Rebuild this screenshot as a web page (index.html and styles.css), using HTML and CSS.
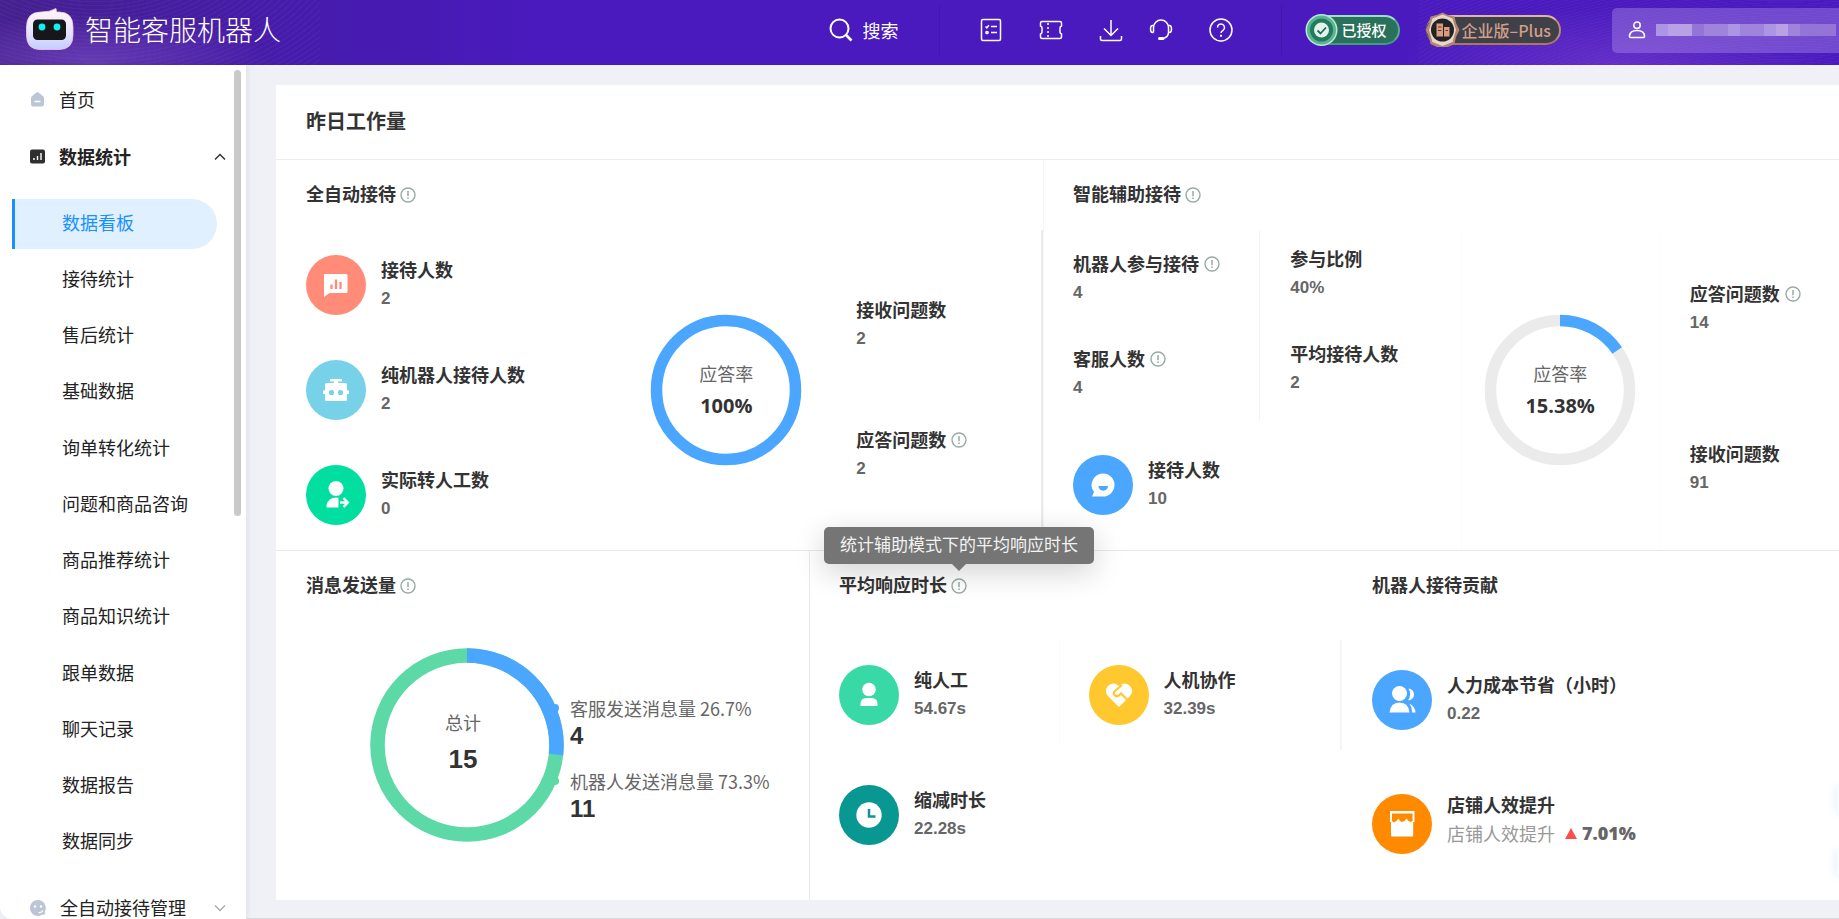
FILE: index.html
```html
<!DOCTYPE html>
<html lang="zh-CN">
<head>
<meta charset="utf-8">
<meta name="viewport" content="width=device-width, initial-scale=1">
<title>智能客服机器人 - 数据看板</title>
<link rel="stylesheet" href="styles.css">
</head>
<body>
<svg class="defs" aria-hidden="true">
  <symbol id="info" viewBox="0 0 16 16"><circle cx="8" cy="8" r="7" fill="none" stroke="#98aaa6" stroke-width="1.4"/><path d="M8 4v5.2M8 10.6v1.5" stroke="#98aaa6" stroke-width="1.5"/></symbol>
</svg>

<header class="topbar">
  <a class="brand" href="#">
    <svg class="brand-logo" width="48" height="44" viewBox="0 0 48 44" aria-hidden="true">
      <defs><linearGradient id="lg" x1="0" y1="0" x2="0" y2="1"><stop offset="0" stop-color="#fff6f5"/><stop offset=".45" stop-color="#eeeaff"/><stop offset="1" stop-color="#c4ccff"/></linearGradient></defs>
      <path d="M15 4 Q24 4 30 0.500 L30.500 4 H33 Q47 4 47 19 V27 Q47 41.500 33 41.500 H14 Q0.500 41.500 0.500 27 V19 Q0.500 4 15 4Z" fill="url(#lg)" stroke="#f3c9e6" stroke-width=".8"/>
      <rect x="7" y="11.500" width="33" height="20.500" rx="4.500" fill="#171719"/>
      <circle cx="16" cy="19" r="3.400" fill="#0ff0f5"/><circle cx="31" cy="19" r="3.400" fill="#0ff0f5"/>
    </svg>
    <span class="brand-name">智能客服机器人</span>
  </a>
  <div class="topbar-tools">
    <button class="search" type="button">
      <svg width="24" height="24" viewBox="0 0 24 24" fill="none" stroke="#fff" stroke-width="2" aria-hidden="true"><circle cx="10.500" cy="10.500" r="9"/><path d="M17 17l5.500 5.500" stroke-width="2.600"/></svg>
      <span>搜索</span>
    </button>
    <nav class="quick" aria-label="快捷工具">
      <button type="button" aria-label="任务"><svg viewBox="0 0 24 24"><rect x="2.500" y="1.500" width="19" height="21" rx="1.500"/><path d="M6.500 8.500l1.300 1.300 2.200-2.500M12 8.500h6M12 14.500h6"/><circle cx="8" cy="14.500" r="1.100"/></svg></button>
      <button type="button" aria-label="卡券"><svg viewBox="0 0 24 24"><path d="M3 3.500h18a1.500 1.500 0 0 1 1.500 1.500V8a2 2 0 0 0-1.500 2v4a2 2 0 0 0 1.500 2v3a1.500 1.500 0 0 1-1.500 1.500H3A1.500 1.500 0 0 1 1.500 19v-3a2 2 0 0 0 1.500-2v-4a2 2 0 0 0-1.500-2V5A1.500 1.500 0 0 1 3 3.500Z"/><path d="M9 5v14.500" stroke-dasharray="2 2"/></svg></button>
      <span class="quick-pair">
        <button type="button" aria-label="下载"><svg viewBox="0 0 24 24"><path d="M12 2v15.500M5 10.500l7 7 7-7M1.500 18v3a1.500 1.500 0 0 0 1.500 1.500h18a1.500 1.500 0 0 0 1.500-1.500v-3"/></svg></button>
        <button type="button" aria-label="客服"><svg viewBox="0 0 24 24"><path d="M4.500 14.500V9.500a7.500 7.500 0 0 1 15 0v5c0 3-2.500 6-6.500 6M4.500 7.500H3.500Q1.500 7.500 1.500 11t2 3.500h1M19.500 7.500h1q2 0 2 3.500t-2 3.500h-1"/><path d="M10.500 20.500h3.500" stroke-width="3" stroke-linecap="round"/></svg></button>
      </span>
      <button type="button" aria-label="帮助"><svg viewBox="0 0 24 24"><circle cx="12" cy="12" r="11"/><path d="M8.500 9.500a3.500 3.500 0 1 1 5.500 2.800q-2 1.200-2 2.700"/><path d="M12 16.800v2" stroke-width="2"/></svg></button>
    </nav>
    <div class="badges">
      <span class="badge badge-auth">
        <svg width="33" height="36" viewBox="0 0 33 36" aria-hidden="true"><circle cx="16.500" cy="18" r="16" fill="#b5ecd6"/><circle cx="16.500" cy="18" r="14.500" fill="#5fb291"/><circle cx="16.500" cy="18" r="11.500" fill="#1f7c5c"/><circle cx="16.500" cy="18" r="7.500" fill="#e4f1ec"/><path d="M12.500 18.500l3 3 5.500-6" fill="none" stroke="#1d6d53" stroke-width="1.800"/></svg>
        <span>已授权</span>
      </span>
      <span class="badge badge-plan">
        <svg width="35" height="36" viewBox="0 0 35 36" aria-hidden="true"><path d="M17.500 0.500L23 3l6.500 1.500L31 11l3.500 7-3.500 7-1.500 7-6.500 3H12l-6.500-3L4 25 .5 18 4 11 5.500 4.500 12 3Z" fill="#b08870"/><path d="M17.500 2.500L27.500 6.500 31 18 27.500 30l-10 4-10-4L4 18 7.500 6.500Z" fill="#ead6c8"/><circle cx="17.500" cy="18" r="11.500" fill="#232226"/><path d="M11.500 11.500h6.500v13h-6.500zM19 15h5.500v9.500H19z" fill="#d99d7e"/><path d="M13 15h3.500M13 18.500h3.500M20.500 18.500h2.500" stroke="#5a3d31" stroke-width="1.200"/></svg>
        <span>企业版–Plus</span>
      </span>
    </div>
    <button class="user" type="button" aria-label="账户">
      <svg width="18" height="18" viewBox="0 0 18 18" fill="none" stroke="#fff" stroke-width="1.500" aria-hidden="true"><circle cx="9" cy="4.200" r="3.200"/><path d="M1.500 15.500q0-6 7.500-6t7.500 6q0 1-1 1h-13q-1 0-1-1Z"/></svg>
      <span class="mask"><i class="m3"></i><i class="m4"></i><i class="m4"></i><i class="m1"></i><i class="m2"></i><i class="m2"></i><i class="m3"></i><i class="m2"></i><i class="m2"></i><i class="m3"></i><i class="m4"></i><i class="m2"></i><i class="m1"></i><i class="m1"></i><i class="m1"></i></span>
    </button>
  </div>
</header>

<div class="shell">
  <aside class="sidebar">
    <nav class="menu" aria-label="主菜单">
      <a class="menu-top" href="#">
        <svg width="15" height="15" viewBox="0 0 15 15" aria-hidden="true"><path d="M6.500.6q1-.8 2 0L12.800 4Q14 5 14 6v6.500q0 2-2 2H3q-2 0-2-2V6q0-1 1.200-2Z" fill="#bcc5d6"/><path d="M4.500 9.500h6" stroke="#fff" stroke-width="1.500"/></svg>
        <span>首页</span>
      </a>
      <a class="menu-top menu-open" href="#" aria-expanded="true">
        <svg width="15" height="15" viewBox="0 0 15 15" aria-hidden="true"><rect width="15" height="14" y=".5" rx="2" fill="#2f2f2f"/><path d="M4 11V9M7.500 11V7M11 11V4" stroke="#fff" stroke-width="1.400"/></svg>
        <span>数据统计</span>
        <svg class="chev" width="12" height="8" viewBox="0 0 12 8" fill="none" stroke="#333" stroke-width="1.500" aria-hidden="true"><path d="M1 6.500l5-5 5 5"/></svg>
      </a>
      <ul class="submenu">
        <li><a class="active" href="#" aria-current="page">数据看板</a></li>
        <li><a href="#">接待统计</a></li>
        <li><a href="#">售后统计</a></li>
        <li><a href="#">基础数据</a></li>
        <li><a href="#">询单转化统计</a></li>
        <li><a href="#">问题和商品咨询</a></li>
        <li><a href="#">商品推荐统计</a></li>
        <li><a href="#">商品知识统计</a></li>
        <li><a href="#">跟单数据</a></li>
        <li><a href="#">聊天记录</a></li>
        <li><a href="#">数据报告</a></li>
        <li><a href="#">数据同步</a></li>
      </ul>
      <a class="menu-top" href="#" aria-expanded="false">
        <svg width="16" height="16" viewBox="0 0 16 16" aria-hidden="true"><path d="M8 0a8 8 0 1 0 4.500 14.600q2.500.4 3-1-1-.8-.6-2A8 8 0 0 0 8 0Z" fill="#bcc5d6"/><circle cx="5" cy="6.500" r="1.200" fill="#fff"/><circle cx="11" cy="6.500" r="1.200" fill="#fff"/><path d="M8.500 12.500q3 .5 4.500-2" fill="none" stroke="#fff" stroke-width="1.200"/></svg>
        <span>全自动接待管理</span>
        <svg class="chev" width="12" height="8" viewBox="0 0 12 8" fill="none" stroke="#aaa" stroke-width="1.300" aria-hidden="true"><path d="M1 1.500l5 5 5-5"/></svg>
      </a>
    </nav>
    <span class="thumb"></span>
  </aside>

  <main class="content">
    <section class="card">
      <h1 class="card-title">昨日工作量</h1>

      <div class="row row-a">
        <section class="panel">
          <h2>全自动接待 <svg class="info"><use href="#info"/></svg></h2>
          <div class="auto-body">
            <div class="stack">
              <div class="metric">
                <svg class="disc" viewBox="0 0 60 60" aria-hidden="true"><circle cx="30" cy="30" r="30" fill="#ff8b78"/><path d="M19 19h21q1.500 0 1.500 1.500v16q0 1.500-1.500 1.500H23.500L18 42V20q0-1 1-1Z" fill="#fff"/><path d="M25.500 34v-4.500M30 34V24.500M34.500 34v-7" stroke="#ff8b78" stroke-width="2.300"/></svg>
                <dl><dt>接待人数</dt><dd>2</dd></dl>
              </div>
              <div class="metric">
                <svg class="disc" viewBox="0 0 60 60" aria-hidden="true"><circle cx="30" cy="30" r="30" fill="#76d1e9"/><path d="M24 19h12v2.500h-4v1.500h7.500q1.500 0 1.500 1.500V30.500h2v3.500h-2v5.500q0 1.500-1.500 1.500h-19Q19 41 19 39.500V34h-2v-3.500h2V24.500q0-1.500 1.500-1.500H28v-1.500h-4Z" fill="#fff"/><circle cx="25.500" cy="32.500" r="2.600" fill="#76d1e9"/><circle cx="34.500" cy="32.500" r="2.600" fill="#76d1e9"/></svg>
                <dl><dt>纯机器人接待人数</dt><dd>2</dd></dl>
              </div>
              <div class="metric">
                <svg class="disc" viewBox="0 0 60 60" aria-hidden="true"><circle cx="30" cy="30" r="30" fill="#00dea0"/><circle cx="30" cy="23.500" r="7.500" fill="#fff"/><path d="M30 32.500q1.500 0 2.500.3v9.700H20.500V40q2-7.500 9.500-7.500Z" fill="#fff"/><path d="M34 37.500h7M37.500 33l4.300 4.500-4.300 4.500" fill="none" stroke="#fff" stroke-width="2.400"/></svg>
                <dl><dt>实际转人工数</dt><dd>0</dd></dl>
              </div>
            </div>
            <div class="donut">
              <svg width="152" height="152" viewBox="0 0 152 152" aria-hidden="true"><circle cx="76" cy="76" r="69.500" fill="none" stroke="#4aa6ff" stroke-width="11.500"/></svg>
              <div class="donut-text"><span>应答率</span><strong>100%</strong></div>
            </div>
            <div class="pair-col auto-pairs">
              <dl><dt>接收问题数</dt><dd>2</dd></dl>
              <dl><dt>应答问题数 <svg class="info"><use href="#info"/></svg></dt><dd>2</dd></dl>
            </div>
          </div>
        </section>

        <section class="panel">
          <h2>智能辅助接待 <svg class="info"><use href="#info"/></svg></h2>
          <div class="assist-body">
            <div class="assist-left">
              <div class="assist-grid">
                <div class="pair-col assist-a">
                  <dl><dt>机器人参与接待 <svg class="info"><use href="#info"/></svg></dt><dd>4</dd></dl>
                  <dl><dt>客服人数 <svg class="info"><use href="#info"/></svg></dt><dd>4</dd></dl>
                </div>
                <div class="pair-col assist-b">
                  <dl><dt>参与比例</dt><dd>40%</dd></dl>
                  <dl><dt>平均接待人数</dt><dd>2</dd></dl>
                </div>
              </div>
              <div class="metric assist-metric">
                <svg class="disc" viewBox="0 0 60 60" aria-hidden="true"><circle cx="30" cy="30" r="30" fill="#4aa6ff"/><path d="M30 18.500a11.500 11.500 0 1 1 0 23H19l2-4.500a11.500 11.500 0 0 1 9-18.500Z" fill="#fff"/><path d="M25.500 31h9.500a4.750 4.750 0 0 1-9.500 0Z" fill="#4aa6ff"/></svg>
                <dl><dt>接待人数</dt><dd>10</dd></dl>
              </div>
            </div>
            <div class="assist-donut">
              <div class="donut">
                <svg width="152" height="152" viewBox="0 0 152 152" aria-hidden="true"><circle cx="76" cy="76" r="69.500" fill="none" stroke="#ebebeb" stroke-width="11.500"/><circle cx="76" cy="76" r="69.500" fill="none" stroke="#4aa6ff" stroke-width="11.500" pathLength="100" stroke-dasharray="15.380 84.620" transform="rotate(-90 76 76)"/></svg>
                <div class="donut-text"><span>应答率</span><strong>15.38%</strong></div>
              </div>
            </div>
            <div class="pair-col assist-pairs">
              <dl><dt>应答问题数 <svg class="info"><use href="#info"/></svg></dt><dd>14</dd></dl>
              <dl><dt>接收问题数</dt><dd>91</dd></dl>
            </div>
          </div>
        </section>
      </div>

      <div class="row row-b">
        <section class="panel">
          <h2>消息发送量 <svg class="info"><use href="#info"/></svg></h2>
          <div class="msg-body">
            <div class="donut">
              <svg width="194" height="194" viewBox="0 0 194 194" aria-hidden="true"><circle cx="97" cy="97" r="89.500" fill="none" stroke="#5cd9a6" stroke-width="14.500"/><circle cx="97" cy="97" r="89.500" fill="none" stroke="#4aa6ff" stroke-width="14.500" pathLength="100" stroke-dasharray="26.700 73.300" transform="rotate(-90 97 97)"/></svg>
              <div class="donut-text donut-total"><span>总计</span><strong>15</strong></div>
            </div>
            <ul class="legend">
              <li class="legend-blue"><span>客服发送消息量 26.7%</span><strong>4</strong></li>
              <li class="legend-green"><span>机器人发送消息量 73.3%</span><strong>11</strong></li>
            </ul>
          </div>
        </section>

        <section class="panel">
          <h2>平均响应时长 <span class="tip-anchor"><svg class="info"><use href="#info"/></svg><span class="tooltip" role="tooltip">统计辅助模式下的平均响应时长</span></span></h2>
          <div class="time-body">
            <div class="metric">
              <svg class="disc" viewBox="0 0 60 60" aria-hidden="true"><circle cx="30" cy="30" r="30" fill="#39d9a5"/><circle cx="30" cy="24.500" r="6.800" fill="#fff"/><path d="M21.500 41v-2q0-6 6-6h5q6 0 6 6v2Z" fill="#fff"/></svg>
              <dl><dt>纯人工</dt><dd>54.67s</dd></dl>
            </div>
            <div class="metric">
              <svg class="disc" viewBox="0 0 60 60" aria-hidden="true"><circle cx="30" cy="30" r="30" fill="#ffc82f"/><path d="M30 42L19 31q-4-5-.5-9.500 5-5.500 11.500-.500 6.500-5 11.500.500 3.500 4.500-.5 9.500Z" fill="#fff"/><path d="M33 20l-7 6q-2.500 2.500 0 4.500 2 1.500 4.500-.700l1.500-1.300 8 8" fill="none" stroke="#ffc82f" stroke-width="2.200"/></svg>
              <dl><dt>人机协作</dt><dd>32.39s</dd></dl>
            </div>
            <div class="metric">
              <svg class="disc" viewBox="0 0 60 60" aria-hidden="true"><circle cx="30" cy="30" r="30" fill="#089791"/><circle cx="30" cy="30" r="12.700" fill="#fff"/><path d="M30 24v7.500h6.500" fill="none" stroke="#089791" stroke-width="2.500"/></svg>
              <dl><dt>缩减时长</dt><dd>22.28s</dd></dl>
            </div>
          </div>
        </section>

        <section class="panel">
          <h2>机器人接待贡献</h2>
          <div class="gain-body">
            <div class="metric">
              <svg class="disc" viewBox="0 0 60 60" aria-hidden="true"><circle cx="30" cy="30" r="30" fill="#4aa6ff"/><circle cx="27.500" cy="23.500" r="7.500" fill="#fff"/><path d="M17.500 42.500q1-10 10-10t10 10Z" fill="#fff"/><path d="M36.500 18.500q5.500 1 5.500 6t-6 6q4-6 .5-12ZM37 33.500q6 2.500 6.500 9H40q0-6-3-9Z" fill="#fff"/></svg>
              <dl><dt>人力成本节省（小时）</dt><dd>0.22</dd></dl>
            </div>
            <div class="metric">
              <svg class="disc" viewBox="0 0 60 60" aria-hidden="true"><circle cx="30" cy="30" r="30" fill="#ff8a00"/><path d="M18 17h24.500v11h-1.300v13.500q0 1-1 1H20q-1 0-1-1V28h-1Z" fill="#fff"/><path d="M20 19.500h20.500V27l-2 1-2.500-1.500-1.500-2-2 2.500-2.500 1-2-1-1.500-2.500-2 2.500-2.500 1.500-2-1.500Z" fill="#ff8a00"/></svg>
              <dl><dt>店铺人效提升</dt><dd class="rise"><span>店铺人效提升</span><svg width="12" height="11" viewBox="0 0 12 11" aria-label="上升"><path d="M6 0l6 11H0Z" fill="#ff4d4f"/></svg><strong>7.01%</strong></dd></dl>
            </div>
          </div>
        </section>
      </div>
    </section>
  </main>
</div>
<div class="floaters" aria-hidden="true"><span></span><span></span></div>
</body>
</html>
```

FILE: styles.css
```css
* { box-sizing: border-box; }

body {
  margin: 0;
  height: 100vh;
  overflow: hidden;
  display: flex;
  flex-direction: column;
  position: relative;
  background: #f0f1f6;
  color: #222;
  font-family: "Noto Sans CJK SC", sans-serif;
  font-size: 18px;
  line-height: 27px;
}

a { color: inherit; text-decoration: none; }
button { margin: 0; padding: 0; border: 0; background: none; color: inherit; font: inherit; }
ul, dl, dd, h1, h2 { margin: 0; padding: 0; }
ul { list-style: none; }
svg { display: block; flex: none; }
.defs { position: absolute; width: 0; height: 0; }

/* Top bar */
.topbar {
  flex: none;
  height: 65px;
  display: flex;
  align-items: center;
  justify-content: space-between;
  padding: 0 0 5px 26px;
  color: #fff;
  background:
    radial-gradient(ellipse 180px 46px at 90px 60px, rgba(150, 100, 220, .4), transparent),
    radial-gradient(ellipse 220px 60px at 88% 100%, rgba(140, 80, 215, .4), transparent),
    repeating-radial-gradient(ellipse at 87% 240%, transparent 0 4px, rgba(255, 255, 255, .03) 4px 6px) right / 420px 100% no-repeat,
    repeating-radial-gradient(ellipse at 30% -120%, transparent 0 4px, rgba(255, 255, 255, .03) 4px 6px) left / 320px 100% no-repeat,
    linear-gradient(90deg, #45208f, #451bab 16%, #4a1abe 30%);
}
.brand { display: flex; align-items: center; gap: 11px; }
.brand-name { padding-bottom: 2px; font-size: 28px; font-weight: 300; line-height: 40px; }
.topbar-tools { display: flex; align-items: center; }
.search { display: flex; align-items: center; gap: 10px; margin-right: 40px; }
.quick {
  display: flex;
  align-items: center;
  gap: 36px;
  height: 50px;
  padding: 0 48px 0 39px;
  border: solid rgba(50, 10, 130, .3);
  border-width: 0 1px;
}
.quick-pair { display: flex; gap: 26px; }
.quick svg { width: 24px; height: 24px; fill: none; stroke: #fff; stroke-width: 1.5; }
.badges { display: flex; gap: 26px; margin: 0 51px 0 24px; }
.badge {
  display: flex;
  align-items: center;
  height: 30px;
  border-radius: 15px;
  line-height: 24px;
}
.badge svg { margin-left: -1px; }
.badge-auth {
  gap: 4px;
  padding-right: 11px;
  border: solid;
  border-width: 2px 2px 2px 0;
  border-color: #9ce0c4 #58ab8c #3f9c7c;
  background: #2a715b;
  font-size: 15px;
  font-weight: 500;
}
.badge-plan {
  gap: 2px;
  padding-right: 8px;
  border: solid;
  border-width: 2px 2px 2px 0;
  border-color: #d9b7a3 #b98c74 #a87860;
  background: #404049;
  color: #cf9f88;
  font-size: 16px;
  font-weight: 500;
}
.user {
  display: flex;
  align-items: center;
  gap: 10px;
  height: 45px;
  padding: 0 3px 0 16px;
  border-radius: 5px 0 0 5px;
  background: rgba(180, 150, 235, .38);
}
.mask { display: flex; }
.mask i { width: 12px; height: 12px; }
.m1 { background: #9474d6; }
.m2 { background: #a084dc; }
.m3 { background: #ac96e3; }
.m4 { background: #b9a1e4; }

/* Sidebar */
.shell { flex: 1; min-height: 0; display: flex; }
.sidebar {
  position: relative;
  flex: none;
  width: 246px;
  overflow: hidden;
  background: #fff;
  border-bottom-left-radius: 12px;
  box-shadow: 1px 0 6px rgba(0, 0, 0, .08);
}
.menu { padding: 6px 0 0; }
.menu-top {
  display: flex;
  align-items: center;
  gap: 14px;
  height: 57px;
  padding: 0 20px 0 30px;
}
.menu-open { font-weight: 700; }
.chev { margin-left: auto; }
.submenu {
  display: flex;
  flex-direction: column;
  justify-content: space-between;
  min-height: 669px;
  margin: 14px 0 11px;
  padding: 0 29px 0 12px;
}
.submenu a {
  display: flex;
  align-items: center;
  height: 50px;
  padding: 0 0 4px 47px;
  border-left: 3px solid transparent;
}
.submenu .active {
  border-color: #1890ff;
  border-radius: 0 25px 25px 0;
  background: #e1f0ff;
  color: #1890ff;
}
.thumb {
  position: absolute;
  top: 5px;
  right: 5px;
  width: 7px;
  height: 446px;
  border-radius: 4px;
  background: #c9c9c9;
}

/* Card */
.content { flex: 1; min-width: 0; padding: 20px 0 18px 30px; border-bottom: 1px solid #d9dade; }
.card { background: #fff; color: #333; }
.card-title {
  padding: 21px 30px 23px;
  border-bottom: 1px solid #ededed;
  font-size: 20px;
  line-height: 30px;
}
.row { display: grid; }
.row-a { grid-template-columns: 767fr 796fr; border-bottom: 1px solid #e9e9e9; }
.row-b { grid-template-columns: 533fr 533fr 497fr; }
.panel { display: flex; flex-direction: column; }
.panel + .panel { border-left: 1px solid #f5f5f5; }
.row-b .panel:nth-child(2) { border-left-color: #ebebeb; }
.row-b .panel:nth-child(3) { border-left-color: transparent; }
h2 {
  display: flex;
  align-items: center;
  gap: 4px;
  height: 70px;
  padding: 0 0 4px 30px;
  font-size: 18px;
}
.panel + .panel h2 { padding-left: 29px; }
.info { width: 16px; height: 16px; }
h2 .info { margin-top: 4px; }
dt { display: flex; align-items: center; gap: 5px; font-weight: 700; line-height: 23px; white-space: nowrap; }
dd { margin-top: 4px; color: #666; font-family: "Liberation Sans", "Noto Sans CJK SC", sans-serif; font-size: 17px; font-weight: 700; }
.metric { display: flex; align-items: center; gap: 15px; }
.disc { width: 60px; height: 60px; }
.pair-col { display: flex; flex-direction: column; }

.donut { display: grid; place-items: center; }
.donut > * { grid-area: 1 / 1; }
.donut-text { display: flex; flex-direction: column; align-items: center; gap: 5px; padding-bottom: 2px; color: #666; }
.donut-text strong {
  color: #333;
  font-family: "Open Sans", "Noto Sans CJK SC", sans-serif;
  font-size: 20px;
}
.donut-total { gap: 10px; padding: 0 8px 8px 0; }
.donut-total strong { font-family: "Liberation Sans", sans-serif; font-size: 26px; }

.auto-body {
  display: grid;
  grid-template-columns: 345fr 152px 54px 185fr;
  align-items: center;
  height: 320px;
  padding-left: 30px;
  border-right: 2px solid #ebebf0;
}
.stack { display: flex; flex-direction: column; gap: 45px; }
.auto-pairs { grid-column: 4; gap: 76px; }

.assist-body { display: grid; grid-template-columns: 416fr 199fr 179fr; height: 320px; }
.assist-grid { display: grid; grid-template-columns: 216fr 200fr; height: 190px; }
.assist-a { gap: 41px; padding: 22px 0 0 29px; border-right: 1px solid #f3f3f3; }
.assist-b { gap: 41px; padding: 17px 0 0 30px; }
.assist-metric { padding: 35px 0 0 29px; }
.assist-donut { display: grid; place-items: center; border: solid #fcfcfc; border-width: 0 1px; }
.assist-pairs { gap: 106px; padding: 52px 0 0 30px; }

.msg-body { display: flex; align-items: flex-start; padding: 27px 0 58px 94px; }
.legend { display: flex; flex-direction: column; gap: 17px; padding-top: 46px; }
.legend li { display: grid; grid-template-columns: 8px auto; column-gap: 11px; align-items: center; margin-left: -13px; white-space: nowrap; line-height: 28px; }
.legend li::before { content: ""; width: 8px; height: 8px; border-radius: 50%; background: currentColor; }
.legend-blue { color: #4aa6ff; }
.legend-green { color: #5cd9a6; }
.legend span { color: #666; }
.legend strong { grid-column: 2; color: #333; font-family: "Liberation Sans", sans-serif; font-size: 24px; }

.time-body { display: grid; grid-template-columns: 250fr 283fr; grid-auto-rows: 110px; row-gap: 10px; padding-top: 19px; }
.time-body .metric { padding-left: 29px; border-right: 1px solid #fbfbfb; }
.time-body .metric:nth-child(2) { border-right: 2px solid #f5f5f7; }
.time-body .metric:nth-child(3) { border-right: 0; }

.gain-body { display: flex; flex-direction: column; gap: 63px; padding: 49px 0 0 29px; }
.rise { display: flex; align-items: center; padding-bottom: 7px; font-size: 18px; }
.rise span { color: #999; font-family: "Noto Sans CJK SC", sans-serif; font-weight: 400; }
.rise svg { margin: 0 5px 0 10px; }
.rise strong { font-family: "Open Sans", sans-serif; }

/* Tooltip floating over the row divider */
.tip-anchor { position: relative; }
.tooltip {
  position: absolute;
  z-index: 2;
  bottom: 30px;
  left: 50%;
  transform: translateX(-50%);
  padding: 3px 16px 7px;
  border-radius: 5px;
  background: #757575;
  box-shadow: 0 8px 30px rgba(0, 0, 0, .18);
  color: #f2f2f2;
  font-size: 17px;
  font-weight: 400;
  white-space: nowrap;
}
.tooltip::after {
  content: "";
  position: absolute;
  top: 100%;
  left: 50%;
  margin-left: -7px;
  border: 7px solid transparent;
  border-top-color: #757575;
  border-bottom: 0;
}

/* Widgets tucked behind the right edge */
.floaters { position: absolute; right: 0; bottom: 44px; display: flex; flex-direction: column; gap: 39px; }
.floaters span { width: 1px; height: 24px; border-radius: 1px; box-shadow: 0 0 10px 1px rgba(100, 175, 255, .4); }
```
